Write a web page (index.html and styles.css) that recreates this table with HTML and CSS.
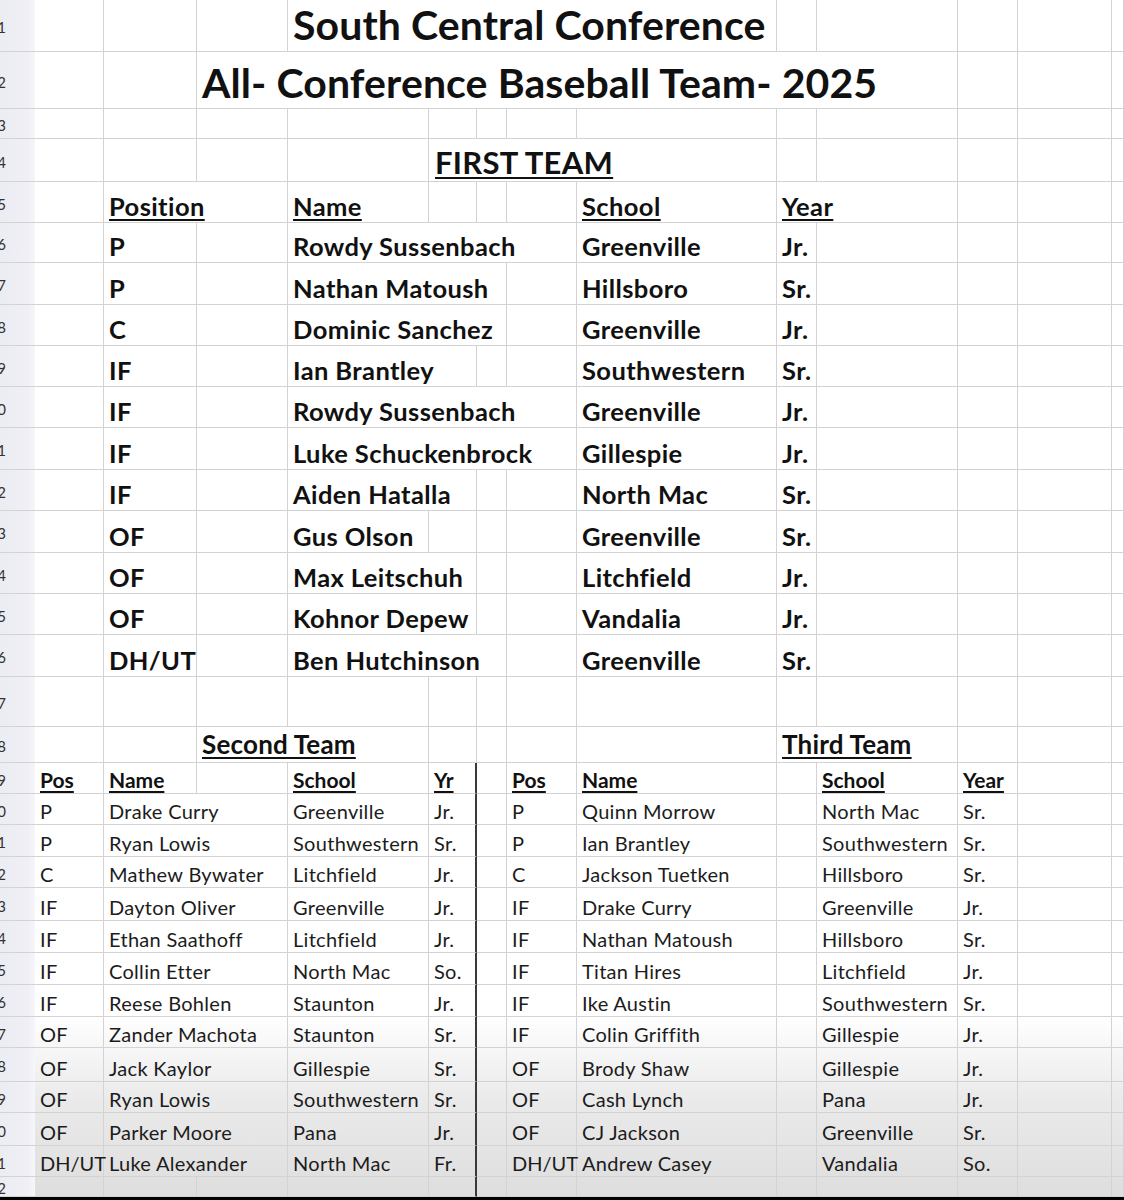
FILE: index.html
```html
<!DOCTYPE html>
<html lang="en">
<head>
<meta charset="utf-8">
<title>South Central Conference All-Conference Baseball Team 2025</title>
<link rel="stylesheet" href="styles.css">
</head>
<body>
<div class="sheet">
  <div class="row h52 r-title">
    <div class="rh"><span>1</span></div><div></div><div></div><div></div>
    <div class="s5">South Central Conference</div>
    <div></div><div></div><div></div><div></div><div></div>
  </div>
  <div class="row h57 r-title2">
    <div class="rh"><span>2</span></div><div></div><div></div>
    <div class="s8">All- Conference Baseball Team- 2025</div>
    <div></div><div></div><div></div>
  </div>
  <div class="row h30">
    <div class="rh"><span>3</span></div><div></div><div></div><div></div><div></div><div></div><div></div><div></div><div></div><div></div><div></div><div></div><div></div><div></div>
  </div>
  <div class="row h43 r-ft">
    <div class="rh"><span>4</span></div><div></div><div></div><div></div><div></div>
    <div class="s4"><u>FIRST TEAM</u></div>
    <div></div><div></div><div></div><div></div><div></div>
  </div>
  <div class="row h41 r-first">
    <div class="rh"><span>5</span></div><div></div>
    <div class="s2"><u>Position</u></div>
    <div><u>Name</u></div><div></div><div></div><div></div>
    <div><u>School</u></div>
    <div class="s2"><u>Year</u></div>
    <div></div><div></div><div></div>
  </div>

  <div class="row h40 r-first">
    <div class="rh"><span>6</span></div><div></div><div>P</div><div></div>
    <div class="s4">Rowdy Sussenbach</div><div>Greenville</div><div>Jr.</div>
    <div></div><div></div><div></div><div></div>
  </div>
  <div class="row h42 r-first">
    <div class="rh"><span>7</span></div><div></div><div>P</div><div></div>
    <div class="s3">Nathan Matoush</div><div></div><div>Hillsboro</div><div>Sr.</div>
    <div></div><div></div><div></div><div></div>
  </div>
  <div class="row h41 r-first">
    <div class="rh"><span>8</span></div><div></div><div>C</div><div></div>
    <div class="s3">Dominic Sanchez</div><div></div><div>Greenville</div><div>Jr.</div>
    <div></div><div></div><div></div><div></div>
  </div>
  <div class="row h41 r-first">
    <div class="rh"><span>9</span></div><div></div><div>IF</div><div></div>
    <div class="s2">Ian Brantley</div><div></div><div></div><div>Southwestern</div><div>Sr.</div>
    <div></div><div></div><div></div><div></div>
  </div>
  <div class="row h41 r-first">
    <div class="rh"><span>10</span></div><div></div><div>IF</div><div></div>
    <div class="s4">Rowdy Sussenbach</div><div>Greenville</div><div>Jr.</div>
    <div></div><div></div><div></div><div></div>
  </div>
  <div class="row h42 r-first">
    <div class="rh"><span>11</span></div><div></div><div>IF</div><div></div>
    <div class="s4">Luke Schuckenbrock</div><div>Gillespie</div><div>Jr.</div>
    <div></div><div></div><div></div><div></div>
  </div>
  <div class="row h41 r-first">
    <div class="rh"><span>12</span></div><div></div><div>IF</div><div></div>
    <div class="s2">Aiden Hatalla</div><div></div><div></div><div>North Mac</div><div>Sr.</div>
    <div></div><div></div><div></div><div></div>
  </div>
  <div class="row h42 r-first">
    <div class="rh"><span>13</span></div><div></div><div>OF</div><div></div>
    <div>Gus Olson</div><div></div><div></div><div></div><div>Greenville</div><div>Sr.</div>
    <div></div><div></div><div></div><div></div>
  </div>
  <div class="row h41 r-first">
    <div class="rh"><span>14</span></div><div></div><div>OF</div><div></div>
    <div class="s2">Max Leitschuh</div><div></div><div></div><div>Litchfield</div><div>Jr.</div>
    <div></div><div></div><div></div><div></div>
  </div>
  <div class="row h41 r-first">
    <div class="rh"><span>15</span></div><div></div><div>OF</div><div></div>
    <div class="s2">Kohnor Depew</div><div></div><div></div><div>Vandalia</div><div>Jr.</div>
    <div></div><div></div><div></div><div></div>
  </div>
  <div class="row h42 r-first">
    <div class="rh"><span>16</span></div><div></div><div>DH/UT</div><div></div>
    <div class="s3">Ben Hutchinson</div><div></div><div>Greenville</div><div>Sr.</div>
    <div></div><div></div><div></div><div></div>
  </div>

  <div class="row h50">
    <div class="rh"><span>17</span></div><div></div><div></div><div></div><div></div><div></div><div></div><div></div><div></div><div></div><div></div><div></div><div></div><div></div>
  </div>
  <div class="row h36 r-team">
    <div class="rh"><span>18</span></div><div></div><div></div>
    <div class="s2"><u>Second Team</u></div>
    <div></div><div></div><div></div><div></div>
    <div class="s2"><u>Third Team</u></div>
    <div></div><div></div><div></div>
  </div>
  <div class="row h31 r-head2">
    <div class="rh"><span>19</span></div>
    <div><u>Pos</u></div><div><u>Name</u></div><div></div><div><u>School</u></div><div class="dk"><u>Yr</u></div>
    <div></div><div><u>Pos</u></div><div><u>Name</u></div><div></div><div><u>School</u></div><div><u>Year</u></div>
    <div></div><div></div>
  </div>

  <div class="row h31 r-data">
    <div class="rh"><span>20</span></div>
    <div>P</div><div class="s2">Drake Curry</div><div>Greenville</div><div class="dk">Jr.</div>
    <div></div><div>P</div><div>Quinn Morrow</div><div></div><div>North Mac</div><div>Sr.</div><div></div><div></div>
  </div>
  <div class="row h32 r-data">
    <div class="rh"><span>21</span></div>
    <div>P</div><div class="s2">Ryan Lowis</div><div>Southwestern</div><div class="dk">Sr.</div>
    <div></div><div>P</div><div>Ian Brantley</div><div></div><div>Southwestern</div><div>Sr.</div><div></div><div></div>
  </div>
  <div class="row h31 r-data">
    <div class="rh"><span>22</span></div>
    <div>C</div><div class="s2">Mathew Bywater</div><div>Litchfield</div><div class="dk">Jr.</div>
    <div></div><div>C</div><div>Jackson Tuetken</div><div></div><div>Hillsboro</div><div>Sr.</div><div></div><div></div>
  </div>
  <div class="row h33 r-data">
    <div class="rh"><span>23</span></div>
    <div>IF</div><div class="s2">Dayton Oliver</div><div>Greenville</div><div class="dk">Jr.</div>
    <div></div><div>IF</div><div>Drake Curry</div><div></div><div>Greenville</div><div>Jr.</div><div></div><div></div>
  </div>
  <div class="row h32 r-data">
    <div class="rh"><span>24</span></div>
    <div>IF</div><div class="s2">Ethan Saathoff</div><div>Litchfield</div><div class="dk">Jr.</div>
    <div></div><div>IF</div><div>Nathan Matoush</div><div></div><div>Hillsboro</div><div>Sr.</div><div></div><div></div>
  </div>
  <div class="row h32 r-data">
    <div class="rh"><span>25</span></div>
    <div>IF</div><div class="s2">Collin Etter</div><div>North Mac</div><div class="dk">So.</div>
    <div></div><div>IF</div><div>Titan Hires</div><div></div><div>Litchfield</div><div>Jr.</div><div></div><div></div>
  </div>
  <div class="row h32 r-data">
    <div class="rh"><span>26</span></div>
    <div>IF</div><div class="s2">Reese Bohlen</div><div>Staunton</div><div class="dk">Jr.</div>
    <div></div><div>IF</div><div>Ike Austin</div><div></div><div>Southwestern</div><div>Sr.</div><div></div><div></div>
  </div>
  <div class="row h31 r-data">
    <div class="rh"><span>27</span></div>
    <div>OF</div><div class="s2">Zander Machota</div><div>Staunton</div><div class="dk">Sr.</div>
    <div></div><div>IF</div><div>Colin Griffith</div><div></div><div>Gillespie</div><div>Jr.</div><div></div><div></div>
  </div>
  <div class="row h34 r-data">
    <div class="rh"><span>28</span></div>
    <div>OF</div><div class="s2">Jack Kaylor</div><div>Gillespie</div><div class="dk">Sr.</div>
    <div></div><div>OF</div><div>Brody Shaw</div><div></div><div>Gillespie</div><div>Jr.</div><div></div><div></div>
  </div>
  <div class="row h31 r-data">
    <div class="rh"><span>29</span></div>
    <div>OF</div><div class="s2">Ryan Lowis</div><div>Southwestern</div><div class="dk">Sr.</div>
    <div></div><div>OF</div><div>Cash Lynch</div><div></div><div>Pana</div><div>Jr.</div><div></div><div></div>
  </div>
  <div class="row h33 r-data">
    <div class="rh"><span>30</span></div>
    <div>OF</div><div class="s2">Parker Moore</div><div>Pana</div><div class="dk">Jr.</div>
    <div></div><div>OF</div><div>CJ Jackson</div><div></div><div>Greenville</div><div>Sr.</div><div></div><div></div>
  </div>
  <div class="row h31 r-data">
    <div class="rh"><span>31</span></div>
    <div class="tight">DH/UT</div><div class="s2">Luke Alexander</div><div>North Mac</div><div class="dk">Fr.</div>
    <div></div><div class="tight">DH/UT</div><div>Andrew Casey</div><div></div><div>Vandalia</div><div>So.</div><div></div><div></div>
  </div>
  <div class="row h20">
    <div class="rh"><span>32</span></div>
    <div></div><div></div><div></div><div></div><div class="dk"></div><div></div><div></div><div></div><div></div><div></div><div></div><div></div><div></div>
  </div>
</div>
</body>
</html>
```

FILE: styles.css
```css
html, body {
  margin: 0;
  padding: 0;
}

body {
  width: 1124px;
  height: 1200px;
  overflow: hidden;
  background: #000;
  font-family: Lato, "Open Sans", "Liberation Sans", sans-serif;
  color: #111;
}

.sheet {
  height: 1197px;
  overflow: hidden;
  background: linear-gradient(to bottom, #ffffff 0, #ffffff 1015px, #eaeaea 1100px, #dedede 1197px);
}

.row {
  display: grid;
  grid-template-columns: 35px 69px 93px 91px 141px 48px 30px 70px 200px 40px 141px 60px 94px 1fr;
  line-height: 1.2;
}

.row > div {
  box-sizing: border-box;
  min-width: 0;
  display: flex;
  align-items: flex-end;
  padding: 0 0 1px 5px;
  white-space: nowrap;
  border-right: 1px solid #d3d3d3;
  border-bottom: 1px solid #d3d3d3;
}

.row > .rh {
  justify-content: flex-end;
  align-items: center;
  padding: 3px 29px 0 0;
  overflow: hidden;
  border-right: none;
  background: linear-gradient(to right, #ececf3 0, #efeff5 28px, #f7f7fa 35px);
  font-family: Lato, sans-serif;
  font-weight: 400;
  font-size: 15px;
  letter-spacing: 0;
  color: #333;
}

.row > .dk {
  border-right: 2px solid #3a3a3a;
}

.s2 { grid-column: span 2; }
.s3 { grid-column: span 3; }
.s4 { grid-column: span 4; }
.s5 { grid-column: span 5; }
.s8 { grid-column: span 8; }

u {
  text-decoration-thickness: 2px;
  text-underline-offset: 3px;
}

/* row heights */
.h20 { height: 20px; }
.h30 { height: 30px; }
.h31 { height: 31px; }
.h32 { height: 32px; }
.h33 { height: 33px; }
.h34 { height: 34px; }
.h36 { height: 36px; }
.h40 { height: 40px; }
.h41 { height: 41px; }
.h42 { height: 42px; }
.h43 { height: 43px; }
.h50 { height: 50px; }
.h52 { height: 52px; }
.h57 { height: 57px; }

/* text styles per row kind */
.r-title > div {
  font-size: 41px;
  font-weight: 700;
  letter-spacing: 0.1px;
  padding-bottom: 2px;
}

.r-title2 > div {
  font-size: 41px;
  font-weight: 700;
  letter-spacing: 0.1px;
  padding-bottom: 1px;
}

.r-ft > div {
  font-size: 31px;
  font-weight: 700;
  letter-spacing: 0.3px;
  padding-bottom: 0;
  padding-left: 6px;
}

.r-first > div {
  font-size: 25.5px;
  font-weight: 700;
  letter-spacing: 0.4px;
  padding-bottom: 0;
}

.r-team > div {
  font-size: 26px;
  font-weight: 700;
  letter-spacing: 0.2px;
  padding-bottom: 2px;
}

.r-head2 > div {
  font-size: 21px;
  font-weight: 700;
  padding-bottom: 1px;
}

.r-data > div {
  font-size: 20px;
  font-weight: 400;
  letter-spacing: 0.3px;
  color: #1c1c1c;
  padding-bottom: 1px;
}

.r-data > .tight {
  letter-spacing: 0;
}
```
